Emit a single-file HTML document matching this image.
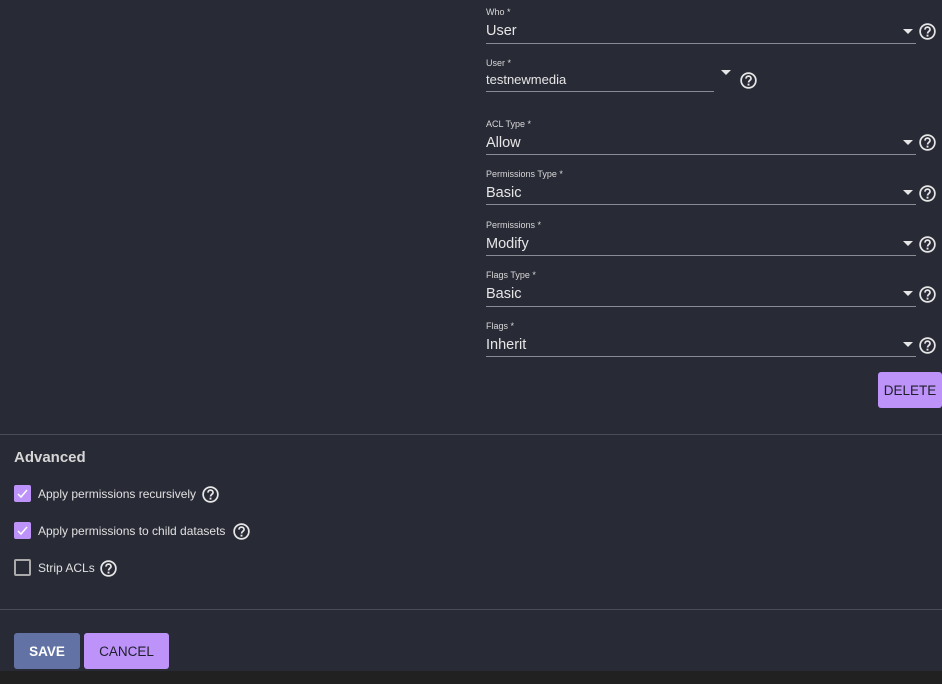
<!DOCTYPE html>
<html><head><style>
*{margin:0;padding:0;box-sizing:border-box}
body{width:942px;height:684px;background:#282a36;position:relative;overflow:hidden;font-family:"Liberation Sans",sans-serif;color:#e0e0e0}
.a{position:absolute}
.lbl{font-size:9px;color:#d8d8d8}
.val{font-size:14.5px;color:#e6e6e6}
.ln{height:1px;background:#8a8b94}
.arr{width:0;height:0;border-left:5px solid transparent;border-right:5px solid transparent;border-top:5px solid #e6e6e6}
.hp{width:19px;height:19px}
.cb{width:17px;height:17px;border-radius:2px}
.ck{background:#bd93f9}
.un{border:2px solid #aaa}
.ct{font-size:12px;color:#e0e0e0}
.btn{border-radius:3px;font-size:13.5px;display:flex;align-items:center;justify-content:center}
</style></head><body>
<svg width="0" height="0" style="position:absolute"><defs><symbol id="h" viewBox="0 0 24 24"><circle cx="12" cy="12" r="9.3" fill="none" stroke="#e6e6e6" stroke-width="2.2"/><path fill="none" stroke="#e6e6e6" stroke-width="2.2" d="M8.8 9.6c0-1.9 1.4-3.2 3.2-3.2s3.2 1.2 3.2 3c0 2.4-3.1 2.4-3.1 5.2"/><rect x="10.8" y="16" width="2.4" height="2.4" fill="#e6e6e6"/></symbol></defs></svg>

<div class="a lbl" style="left:486px;top:7px">Who *</div>
<div class="a val" style="left:486px;top:23px">User</div>
<div class="a ln" style="left:486px;top:43px;width:430px"></div>
<div class="a arr" style="left:903px;top:29px"></div>
<svg class="a hp" style="left:918px;top:22px"><use href="#h"/></svg>

<div class="a lbl" style="left:486px;top:58px">User *</div>
<div class="a val" style="left:486px;top:72px;font-size:13px">testnewmedia</div>
<div class="a ln" style="left:486px;top:91px;width:228px"></div>
<div class="a arr" style="left:721px;top:70px"></div>
<svg class="a hp" style="left:739px;top:71px"><use href="#h"/></svg>

<div class="a lbl" style="left:486px;top:119px">ACL Type *</div>
<div class="a val" style="left:486px;top:135px">Allow</div>
<div class="a ln" style="left:486px;top:154px;width:430px"></div>
<div class="a arr" style="left:903px;top:140px"></div>
<svg class="a hp" style="left:918px;top:133px"><use href="#h"/></svg>

<div class="a lbl" style="left:486px;top:169px">Permissions Type *</div>
<div class="a val" style="left:486px;top:185px">Basic</div>
<div class="a ln" style="left:486px;top:204px;width:430px"></div>
<div class="a arr" style="left:903px;top:190px"></div>
<svg class="a hp" style="left:918px;top:184px"><use href="#h"/></svg>

<div class="a lbl" style="left:486px;top:220px">Permissions *</div>
<div class="a val" style="left:486px;top:236px">Modify</div>
<div class="a ln" style="left:486px;top:255px;width:430px"></div>
<div class="a arr" style="left:903px;top:241px"></div>
<svg class="a hp" style="left:918px;top:235px"><use href="#h"/></svg>

<div class="a lbl" style="left:486px;top:270px">Flags Type *</div>
<div class="a val" style="left:486px;top:286px">Basic</div>
<div class="a ln" style="left:486px;top:306px;width:430px"></div>
<div class="a arr" style="left:903px;top:291px"></div>
<svg class="a hp" style="left:918px;top:285px"><use href="#h"/></svg>

<div class="a lbl" style="left:486px;top:321px">Flags *</div>
<div class="a val" style="left:486px;top:337px">Inherit</div>
<div class="a ln" style="left:486px;top:356px;width:430px"></div>
<div class="a arr" style="left:903px;top:342px"></div>
<svg class="a hp" style="left:918px;top:336px"><use href="#h"/></svg>

<div class="a btn" style="left:878px;top:372px;width:64px;height:36px;background:#bd93f9;color:#1e1e2a">DELETE</div>

<div class="a" style="left:0;top:434px;width:942px;height:1px;background:#4a4c58"></div>
<div class="a" style="left:14px;top:449px;font-size:15px;font-weight:bold;color:#d6d6d6">Advanced</div>

<div class="a cb ck" style="left:14px;top:485px"><svg width="17" height="17"><path d="M4 9l3 3 6-7" stroke="#fff" stroke-width="1.5" fill="none"/></svg></div>
<div class="a ct" style="left:38px;top:487px">Apply permissions recursively</div>
<svg class="a hp" style="left:201px;top:485px"><use href="#h"/></svg>

<div class="a cb ck" style="left:14px;top:522px"><svg width="17" height="17"><path d="M4 9l3 3 6-7" stroke="#fff" stroke-width="1.5" fill="none"/></svg></div>
<div class="a ct" style="left:38px;top:524px">Apply permissions to child datasets</div>
<svg class="a hp" style="left:232px;top:522px"><use href="#h"/></svg>

<div class="a cb un" style="left:14px;top:559px"></div>
<div class="a ct" style="left:38px;top:561px">Strip ACLs</div>
<svg class="a hp" style="left:99px;top:559px"><use href="#h"/></svg>

<div class="a" style="left:0;top:609px;width:942px;height:1px;background:#4a4c58"></div>
<div class="a btn" style="left:14px;top:633px;width:66px;height:36px;background:#6272a4;color:#fff;font-weight:bold">SAVE</div>
<div class="a btn" style="left:84px;top:633px;width:85px;height:36px;background:#bd93f9;color:#1e1e2a">CANCEL</div>
<div class="a" style="left:0;top:671px;width:942px;height:13px;background:#212121"></div>
</body></html>
